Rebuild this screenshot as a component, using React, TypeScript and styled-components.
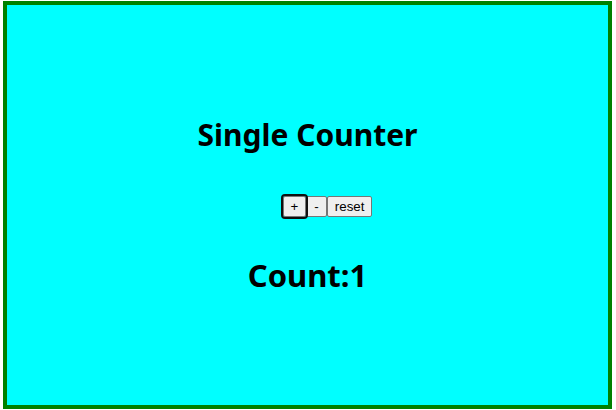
import React from "react";
import styled, { createGlobalStyle } from "styled-components";

const Global = createGlobalStyle`
  html, body { margin: 0; padding: 0; background: #ffffff; }
  body { font-family: "Noto Sans", "Open Sans", sans-serif; }
`;

const Page = styled.div`
  padding: 1px 4px 1px 3px;
`;

const Frame = styled.div`
  box-sizing: border-box;
  height: 408px;
  border: 4px solid #008000;
  background: #00ffff;
  display: flex;
  flex-direction: column;
  align-items: center;
  padding-top: 111px;
`;

const Heading = styled.h1<{ $size: number }>`
  margin: 0;
  font-size: ${(p) => p.$size}px;
  line-height: 38px;
  font-weight: 700;
  color: #000;
`;

const Controls = styled.div`
  display: flex;
  margin: 42px 0 39px;
  padding-left: 40px;
`;

const Button = styled.button<{ $focused?: boolean }>`
  font-family: "Liberation Sans", Arial, sans-serif;
  font-size: 13.33px;
  height: 21px;
  padding: 1px 7px;
  color: #000;
  background: #efefef;
  border: 1px solid #767676;
  border-radius: 2px;
  outline: ${(p) => (p.$focused ? "2px solid #101010" : "none")};
  outline-offset: 0;
  position: relative;
  z-index: ${(p) => (p.$focused ? 1 : 0)};
`;

export default function App() {
  return (
    <Page>
      <Global />
      <Frame>
        <Heading $size={30}>Single Counter</Heading>
        <Controls>
          <Button $focused>+</Button>
          <Button>-</Button>
          <Button>reset</Button>
        </Controls>
        <Heading $size={31}>Count:1</Heading>
      </Frame>
    </Page>
  );
}
